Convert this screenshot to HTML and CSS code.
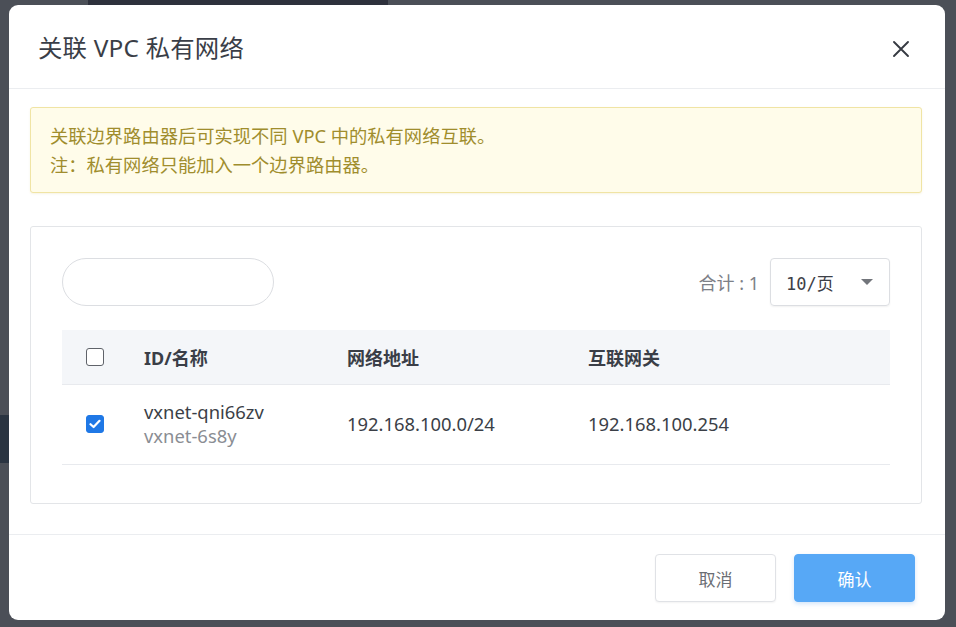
FILE: index.html
```html
<!DOCTYPE html>
<html lang="zh-CN">
<head>
<meta charset="utf-8">
<title>关联 VPC 私有网络</title>
<link rel="stylesheet" href="styles.css">
</head>
<body>
<div class="backdrop-top"></div>
<div class="backdrop-left"></div>
<div class="modal">
  <div class="modal-header">
    <h1 class="modal-title">关联 VPC 私有网络</h1>
    <button class="close-btn" aria-label="关闭">
      <svg width="18" height="18" viewBox="0 0 18 18"><path d="M2 2 L16 16 M16 2 L2 16" stroke="#363a42" stroke-width="1.9" stroke-linecap="round" fill="none"/></svg>
    </button>
  </div>
  <div class="modal-body">
    <div class="alert">
      <p>关联边界路由器后可实现不同 VPC 中的私有网络互联。</p>
      <p>注：私有网络只能加入一个边界路由器。</p>
    </div>
    <div class="panel">
      <div class="toolbar">
        <input class="search" type="text">
        <div class="pager">
          <span class="total">合计 : 1</span>
          <div class="select"><span class="select-text">10/页</span><span class="caret"></span></div>
        </div>
      </div>
      <div class="table">
        <div class="row head">
          <div class="cell check"><span class="checkbox"></span></div>
          <div class="cell">ID/名称</div>
          <div class="cell">网络地址</div>
          <div class="cell">互联网关</div>
        </div>
        <div class="row body-row">
          <div class="cell check"><span class="checkbox checked"><svg width="12" height="10" viewBox="0 0 12 10"><path d="M1.5 5.2 L4.6 8 L10.5 1.8" stroke="#fff" stroke-width="2.2" fill="none" stroke-linecap="round" stroke-linejoin="round"/></svg></span></div>
          <div class="cell name"><div class="id">vxnet-qni66zv</div><div class="sub">vxnet-6s8y</div></div>
          <div class="cell">192.168.100.0/24</div>
          <div class="cell">192.168.100.254</div>
        </div>
      </div>
    </div>
  </div>
  <div class="modal-footer">
    <button class="btn btn-default">取消</button>
    <button class="btn btn-primary">确认</button>
  </div>
</div>
</body>
</html>
```

FILE: styles.css
```css
* { box-sizing: border-box; }
html, body { margin: 0; padding: 0; }
body {
  width: 956px;
  height: 627px;
  overflow: hidden;
  background: #4b4f57;
  font-family: "Noto Sans", "Noto Sans CJK SC", sans-serif;
  position: relative;
  padding-top: 5px;
  padding-left: 9px;
}
.backdrop-top {
  position: absolute;
  left: 88px; top: 0;
  width: 300px; height: 5px;
  background: #2e313c;
}
.backdrop-left {
  position: absolute;
  left: 0; top: 415px;
  width: 9px; height: 48px;
  background: #2a3441;
}
.modal {
  position: relative;
  width: 936px;
  height: 615px;
  background: #fff;
  border-radius: 9px;
  display: flex;
  flex-direction: column;
  overflow: hidden;
}
.modal-header {
  height: 84px;
  flex: none;
  display: flex;
  align-items: center;
  justify-content: space-between;
  padding: 4px 35px 0 29px;
  border-bottom: 1px solid #ebedf0;
}
.modal-title {
  margin: -4px 0 0 0;
  font-size: 24.4px;
  font-weight: 400;
  color: #3a3e47;
  letter-spacing: 0.2px;
}
.close-btn {
  border: 0;
  background: none;
  padding: 0;
  width: 18px; height: 18px;
  display: flex;
}
.modal-body {
  flex: 1;
  padding: 18px 23px 0 21px;
  border-bottom: 1px solid #ebedf0;
}
.alert {
  height: 86px;
  background: #fffcea;
  border: 1px solid #f0e4a4;
  border-radius: 3px;
  box-shadow: 0 1px 2px rgba(200, 180, 80, 0.15);
  padding: 13px 19px;
  color: #a08d2d;
  font-size: 18.3px;
  line-height: 29px;
}
.alert p { margin: 0; }
.panel {
  margin-top: 33px;
  height: 278px;
  border: 1px solid #e3e5e8;
  border-radius: 3px;
  padding: 31px 31px 0 31px;
}
.toolbar {
  display: flex;
  justify-content: space-between;
  align-items: center;
  height: 48px;
}
.search {
  width: 212px;
  height: 48px;
  border: 1px solid #dcdee2;
  border-radius: 24px;
  outline: none;
  background: #fff;
}
.pager {
  display: flex;
  align-items: center;
  gap: 11px;
}
.total {
  font-size: 18px;
  color: #7d8087;
}
.select {
  width: 120px;
  height: 48px;
  border: 1px solid #dcdee2;
  border-radius: 4px;
  box-shadow: 0 1px 2px rgba(0,0,0,0.06);
  display: flex;
  align-items: center;
  justify-content: space-between;
  padding: 0 16px 0 15px;
}
.select-text {
  font-family: "DejaVu Sans Mono", "Noto Sans CJK SC", monospace;
  font-size: 17px;
  color: #3d4047;
}
.caret {
  width: 0; height: 0;
  border-left: 6px solid transparent;
  border-right: 6px solid transparent;
  border-top: 6px solid #72757b;
}
.table { margin-top: 24px; }
.row {
  display: grid;
  grid-template-columns: 82px 203px 241px 1fr;
  align-items: center;
}
.row.head {
  height: 55px;
  background: #f4f6f9;
  border-bottom: 1px solid #e8eaee;
  font-weight: 700;
  font-size: 18px;
  color: #3a3e47;
  padding-bottom: 1px;
}
.row.body-row {
  height: 80px;
  border-bottom: 1px solid #e8eaee;
  font-size: 18.4px;
  color: #3b3f47;
  padding-bottom: 2px;
}
.cell.check {
  padding-left: 24px;
  display: flex;
}
.checkbox {
  width: 18px; height: 18px;
  border: 1.5px solid #5f636a;
  border-radius: 3px;
  background: #fff;
  display: flex;
  align-items: center;
  justify-content: center;
}
.checkbox.checked {
  background: #1f78e6;
  border-color: #1f78e6;
}
.name { line-height: 24px; padding-top: 1px; }
.name .sub { color: #8a8d93; }
.modal-footer {
  height: 85px;
  flex: none;
  display: flex;
  justify-content: flex-end;
  align-items: center;
  gap: 18px;
  padding: 1px 30px 0 0;
}
.btn {
  width: 121px;
  height: 48px;
  border-radius: 4px;
  font-family: "Noto Sans CJK SC", sans-serif;
  font-size: 17px;
  cursor: pointer;
}
.btn-default {
  background: #fff;
  border: 1px solid #e0e2e6;
  color: #6b6e74;
  box-shadow: 0 1px 2px rgba(0,0,0,0.05);
}
.btn-primary {
  background: #57a8f6;
  border: 1px solid #57a8f6;
  color: #fff;
  box-shadow: 0 2px 4px rgba(80,150,230,0.25);
}
```
